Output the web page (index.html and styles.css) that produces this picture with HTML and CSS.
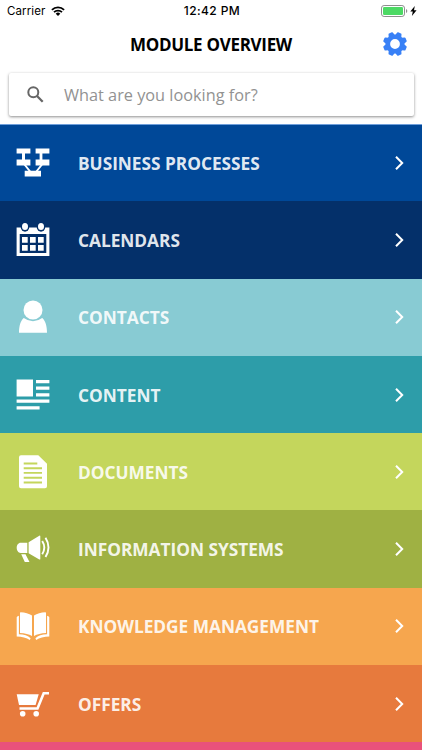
FILE: index.html
```html
<!DOCTYPE html>
<html lang="en">
<head>
    <meta charset="UTF-8">
    <meta name="viewport" content="width=device-width, initial-scale=1.0">
    <title>Module Overview</title>
    <link rel="stylesheet" href="styles.css">
</head>
<body>
    <div class="status-bar">
        <div class="status-left">
            <span class="carrier">Carrier</span>
            <svg class="wifi" viewBox="0 0 14 10">
                <path d="M0.9 3.9a8.7 8.7 0 0 1 12.2 0M3 6.2a5.7 5.7 0 0 1 8 0" fill="none" stroke="#000" stroke-width="1.8"/>
                <path d="M7 10L4.7 7.7a3.3 3.3 0 0 1 4.6 0z"/>
            </svg>
        </div>
        <span class="clock">12:42 PM</span>
        <div class="status-right">
            <svg class="battery" viewBox="0 0 28 12">
                <rect x="0.5" y="0.5" width="23" height="11" rx="2.6" fill="#fff" stroke="#8e8e8e"/>
                <rect x="2" y="2" width="20" height="8" rx="1.2" fill="#4cd964"/>
                <path d="M25 4v4q1.3-.6 1.3-2T25 4z" fill="#8e8e8e"/>
            </svg>
            <svg class="bolt" viewBox="0 0 7 10"><path d="M4.8 0L.3 5.6h2.5L1.9 10l4.7-5.8H4z"/></svg>
        </div>
    </div>
    <header class="header">
        <h1 class="title">MODULE OVERVIEW</h1>
        <svg class="gear" viewBox="-12 -12 24 24">
            <g fill="#3880f6">
                <path id="tooth" d="M-3.3-8.5L-2.3-11.4q.2-.6.8-.6h3q.6 0 .8.6L3.3-8.5z" transform="rotate(22.5)"/>
                <use href="#tooth" transform="rotate(45)"/>
                <use href="#tooth" transform="rotate(90)"/>
                <use href="#tooth" transform="rotate(135)"/>
                <use href="#tooth" transform="rotate(180)"/>
                <use href="#tooth" transform="rotate(225)"/>
                <use href="#tooth" transform="rotate(270)"/>
                <use href="#tooth" transform="rotate(315)"/>
            </g>
            <circle r="7.2" fill="none" stroke="#3880f6" stroke-width="4.6"/>
        </svg>
    </header>
    <div class="search-wrap">
        <div class="search">
            <svg class="search-icon" viewBox="0 0 17 17">
                <circle cx="6.3" cy="6.3" r="5" fill="none" stroke="#666" stroke-width="2"/>
                <path d="M10 10l5.7 5.7" stroke="#666" stroke-width="2.3"/>
            </svg>
            <span class="placeholder">What are you looking for?</span>
        </div>
    </div>
    <ul class="modules">
        <li class="module business">
            <svg class="icon" viewBox="0 0 34 34">
                <path d="M.6 2.4h13.8v5H9v6h5.4v6H.6v-6H6v-6H.6zM19.6 2.4h13.8v5h-7v6h7v6H19.6v-6h4v-6h-4zM8.7 24.7H25v5.7H8.7z"/>
                <path d="M8.5 18.5l6 7.5M26 18.5L20 26" fill="none" stroke="#fff" stroke-width="2"/>
            </svg>
            <span class="name">BUSINESS PROCESSES</span>
            <svg class="arrow" viewBox="0 0 9 14"><path d="M1 .8L7.2 7 1 13.2"/></svg>
        </li>
        <li class="module calendars">
            <svg class="icon" viewBox="0 0 34 34">
                <path fill-rule="evenodd" d="M.6 4.4h32.8v28.7H.6zM3.7 11.1v19h26.6v-19z"/>
                <path d="M6 14.1h5.7v5.7H6zM14 14.1h5.7v5.7H14zM22 14.1h5.7v5.7H22zM6 22.1h5.7v5.7H6zM14 22.1h5.7v5.7H14zM22 22.1h5.7v5.7H22z"/>
                <g fill="#04306a"><ellipse cx="9" cy="3.8" rx="4.3" ry="4.9"/><ellipse cx="25" cy="3.8" rx="4.3" ry="4.9"/></g>
                <ellipse cx="9" cy="3.6" rx="3" ry="3.5"/>
                <ellipse cx="25" cy="3.6" rx="3" ry="3.5"/>
            </svg>
            <span class="name">CALENDARS</span>
            <svg class="arrow" viewBox="0 0 9 14"><path d="M1 .8L7.2 7 1 13.2"/></svg>
        </li>
        <li class="module contacts">
            <svg class="icon" viewBox="0 0 34 34">
                <circle cx="17" cy="10" r="9.5"/>
                <path d="M7.8 18q9.2 6.6 18.4 0c3.2 2.6 4.8 8 4.8 14.8H3C3 26 4.6 20.6 7.8 18z"/>
            </svg>
            <span class="name">CONTACTS</span>
            <svg class="arrow" viewBox="0 0 9 14"><path d="M1 .8L7.2 7 1 13.2"/></svg>
        </li>
        <li class="module content">
            <svg class="icon" viewBox="0 0 34 34">
                <path d="M.6 1.5H17v17H.6zM20 2h13.4v3.2H20zM20 8.5h13.4v3.2H20zM20 15.2h13.4v3.2H20zM.6 21.6h32.8v3.2H.6zM.6 28.3h23v3.2H.6z"/>
            </svg>
            <span class="name">CONTENT</span>
            <svg class="arrow" viewBox="0 0 9 14"><path d="M1 .8L7.2 7 1 13.2"/></svg>
        </li>
        <li class="module documents">
            <svg class="icon" viewBox="0 0 34 34">
                <path d="M5 .2h17.3L31 8.8v22.4q0 2-2 2H5q-2 0-2-2v-29q0-2 2-2z"/>
                <path d="M7.7 8.5h13.6M7.7 13.2H26M7.7 17.9H26M7.7 22.7H26M7.7 27.5H26" stroke="#c4d65c" stroke-width="1.9"/>
            </svg>
            <span class="name">DOCUMENTS</span>
            <svg class="arrow" viewBox="0 0 9 14"><path d="M1 .8L7.2 7 1 13.2"/></svg>
        </li>
        <li class="module information">
            <svg class="icon" viewBox="0 0 34 34">
                <path d="M11.3 10.7v10.2H4.7C2.2 20.9.7 18.5.7 15.8s1.5-5.1 4-5.1zM12.6 10.2L23.3 3.7q1-.4 1 .6v22.6q0 1-1 .6L12.6 21.3zM5.2 22.2h4.3l4 7.8H8.8z"/>
                <path d="M26.2 9q4.2 6.6 0 13.2M29.5 5.8q6 9.6 0 19.2" fill="none" stroke="#fff" stroke-width="1.9"/>
            </svg>
            <span class="name">INFORMATION SYSTEMS</span>
            <svg class="arrow" viewBox="0 0 9 14"><path d="M1 .8L7.2 7 1 13.2"/></svg>
        </li>
        <li class="module knowledge">
            <svg class="icon" viewBox="0 0 34 34">
                <g id="page">
                    <path d="M4 3.9Q4 3.3 4.6 3.3C9 3.5 13 4.4 16 6.6V27C13 25 9 24.2 4 23.9z"/>
                    <path d="M2.9 6.7v18.6C8 25.6 12 26.6 14.6 29.2L13.8 31C10.5 28.8 6 27.9.7 27.6V8.2q0-1 2.2-1.5z"/>
                </g>
                <use href="#page" transform="matrix(-1 0 0 1 34 0)"/>
            </svg>
            <span class="name">KNOWLEDGE MANAGEMENT</span>
            <svg class="arrow" viewBox="0 0 9 14"><path d="M1 .8L7.2 7 1 13.2"/></svg>
        </li>
        <li class="module offers">
            <svg class="icon" viewBox="0 0 34 34">
                <path d="M.7 7.3h22L19.6 18H3z"/>
                <path d="M33 6.2h-5.3L21.5 21.5H3.5" fill="none" stroke="#fff" stroke-width="2.6"/>
                <circle cx="6.7" cy="26.7" r="2.8"/>
                <circle cx="20.2" cy="26.7" r="2.8"/>
            </svg>
            <span class="name">OFFERS</span>
            <svg class="arrow" viewBox="0 0 9 14"><path d="M1 .8L7.2 7 1 13.2"/></svg>
        </li>
        <li class="module next"></li>
    </ul>
</body>
</html>
```
FILE: styles.css
```css
*{
    box-sizing: border-box;
}
body{
    margin: 0;
    height: 750px;
    overflow: hidden;
    background: #fff;
    font-family: "Open Sans", sans-serif;
}
.status-bar{
    display: grid;
    grid-template-columns: 1fr auto 1fr;
    align-items: center;
    height: 22px;
    padding: 0 5px 0 7px;
    font: 12px/22px Inter, sans-serif;
}
.status-left, .status-right{
    display: flex;
    align-items: center;
}
.status-right{
    justify-content: flex-end;
}
.carrier{
    font-size: 11.5px;
    letter-spacing: 0.1px;
}
.wifi{
    width: 14px;
    height: 10px;
    margin-left: 6px;
}
.clock{
    font-weight: 500;
    letter-spacing: 0.4px;
}
.battery{
    width: 28px;
    height: 12px;
}
.bolt{
    width: 7px;
    height: 10px;
    margin-left: 1px;
}
.header{
    display: grid;
    grid-template-columns: 1fr auto 1fr;
    align-items: center;
    height: 44px;
    padding: 0 15px;
}
.title{
    grid-column: 2;
    margin: 0;
    font-size: 17px;
    font-weight: 700;
    letter-spacing: -0.3px;
}
.gear{
    justify-self: end;
    width: 24px;
    height: 24px;
}
.search-wrap{
    height: 59px;
    padding: 7px 8.5px 0;
    border-bottom: 1px solid #6f9fdb;
}
.search{
    display: flex;
    align-items: center;
    height: 43px;
    padding-left: 18.5px;
    border-radius: 2px;
    box-shadow: 0 1px 3px rgba(0,0,0,.45);
}
.search-icon{
    width: 17px;
    height: 17px;
}
.placeholder{
    margin-left: 20px;
    font-size: 16.3px;
    color: #929292;
}
.modules{
    margin: 0;
    padding: 0;
    list-style: none;
}
.module{
    display: flex;
    align-items: center;
    height: 77.3px;
    padding: 0 18px 0 16px;
    color: rgba(255,255,255,.9);
}
.icon{
    width: 34px;
    height: 34px;
    fill: #fff;
}
.name{
    flex: 1;
    margin-left: 28px;
    padding-top: 1px;
    font-size: 17.3px;
    font-weight: 700;
    letter-spacing: -0.02px;
}
.arrow{
    width: 9px;
    height: 14px;
    fill: none;
    stroke: #fff;
    stroke-width: 2;
}
.business{
    height: 76.3px;
    padding-bottom: 1px;
    background: #004898;
}
.calendars{ background: #04306a; }
.contacts{ background: #88cbd3; }
.content{ background: #2d9da9; }
.documents{ background: #c4d65c; }
.information{ background: #9fb143; }
.knowledge{ background: #f6a64e; }
.offers{ background: #e77a3d; }
.next{
    height: 7.6px;
    background: #e9527b;
}
```
